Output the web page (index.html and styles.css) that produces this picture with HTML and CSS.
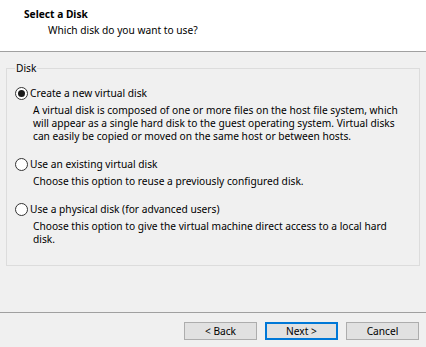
FILE: index.html
```html
<!DOCTYPE html>
<html>
  <head>
    <meta charset="utf-8">
    <title>Select a Disk</title>
    <link rel="stylesheet" href="styles.css">
  </head>
  <body>
    <div class="wizard">
      <header class="wiz-head">
        <div class="wiz-title">Select a Disk</div>
        <div class="wiz-sub">Which disk do you want to use?</div>
      </header>
      <main class="wiz-body">
        <fieldset class="group">
          <legend>Disk</legend>
          <div class="option">
            <label class="radio-row"><span class="radio checked"></span>Create a new virtual disk</label>
            <p class="desc">A virtual disk is composed of one or more files on the host file system, which will appear as a single hard disk to the guest operating system. Virtual disks can easily be copied or moved on the same host or between hosts.</p>
          </div>
          <div class="option">
            <label class="radio-row"><span class="radio"></span>Use an existing virtual disk</label>
            <p class="desc">Choose this option to reuse a previously configured disk.</p>
          </div>
          <div class="option">
            <label class="radio-row"><span class="radio"></span>Use a physical disk (for advanced users)</label>
            <p class="desc">Choose this option to give the virtual machine direct access to a local hard disk.</p>
          </div>
        </fieldset>
      </main>
      <footer class="wiz-foot">
        <button class="btn">&lt; Back</button>
        <button class="btn default">Next &gt;</button>
        <button class="btn">Cancel</button>
      </footer>
    </div>
  </body>
</html>
```

FILE: styles.css
```css
html, body { margin: 0; padding: 0; height: 100%; }
body { background-color: #f0f0f0; color: #000; font-family: "Noto Sans", "Open Sans", sans-serif; font-size: 10.2px; }
.wizard { display: flex; flex-direction: column; height: 100%; }

.wiz-head { background-color: #fff; height: 52px; border-bottom: 1px solid #a0a0a0; box-sizing: border-box; padding-top: 7px; }
.wiz-title { font-weight: bold; padding-left: 24px; line-height: 14px; }
.wiz-sub { padding-left: 48px; line-height: 14px; margin-top: 2px; }

.wiz-body { flex: 1; padding: 10px 6px 0 6px; }
.group { margin: 0; border: 1px solid #dcdcdc; padding: 12px 10px 19px 8px; }
.group legend { padding: 0 1px; margin-left: 0; line-height: 13px; }

.option { margin-bottom: 15px; }
.option:last-child { margin-bottom: 0; }
.radio-row { display: flex; align-items: center; line-height: 13px; }
.radio { width: 11px; height: 11px; border: 1px solid #333; border-radius: 50%; background-color: #fff; margin-right: 2px; position: relative; }
.radio.checked::after { content: ""; position: absolute; left: 2px; top: 2px; width: 7px; height: 7px; border-radius: 50%; background-color: #1a1a1a; }
.desc { margin: 4px 0 0 18px; line-height: 13px; }

.wiz-foot { border-top: 1px solid #a0a0a0; height: 35px; box-sizing: border-box; display: flex; justify-content: flex-end; align-items: flex-start; gap: 8px; padding: 9px 7px 0 0; }
.btn { width: 73px; height: 18px; box-sizing: border-box; background-color: #e1e1e1; border: 1px solid #adadad; font: inherit; padding: 0; color: #000; }
.btn.default { border: 2px solid #0078d7; }
```
